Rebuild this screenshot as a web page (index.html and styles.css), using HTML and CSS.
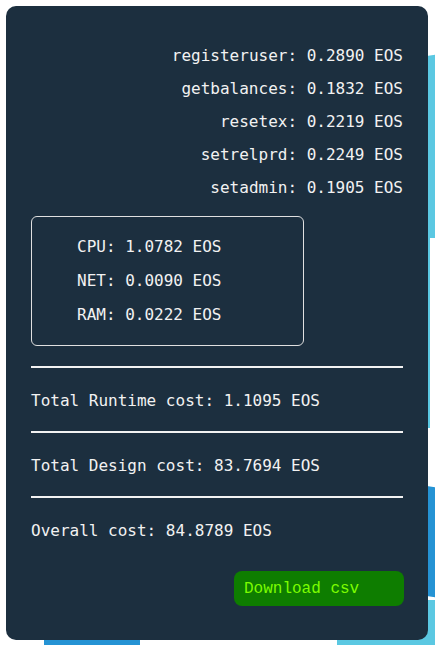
FILE: index.html
```html
<!DOCTYPE html>
<html>
<head>
<meta charset="utf-8">
<link rel="stylesheet" href="styles.css">
</head>
<body>
<div class="page">
  <div class="deco deco-cyan-top"></div>
  <div class="deco deco-cyan-line"></div>
  <div class="deco deco-blue-right"></div>
  <div class="deco deco-blue-bottom"></div>
  <div class="deco deco-cyan-bottom"></div>
  <div class="card">
    <div class="actions">
      <div class="row">registeruser: 0.2890 EOS</div>
      <div class="row">getbalances: 0.1832 EOS</div>
      <div class="row">resetex: 0.2219 EOS</div>
      <div class="row">setrelprd: 0.2249 EOS</div>
      <div class="row">setadmin: 0.1905 EOS</div>
    </div>
    <div class="resources">
      <div class="row">CPU: 1.0782 EOS</div>
      <div class="row">NET: 0.0090 EOS</div>
      <div class="row">RAM: 0.0222 EOS</div>
    </div>
    <div class="divider"></div>
    <div class="total">Total Runtime cost: 1.1095 EOS</div>
    <div class="divider"></div>
    <div class="total">Total Design cost: 83.7694 EOS</div>
    <div class="divider"></div>
    <div class="total overall">Overall cost: 84.8789 EOS</div>
    <button class="download">Download csv</button>
  </div>
</div>
</body>
</html>
```
FILE: styles.css
```css
html, body {
  margin: 0;
  padding: 0;
  background: #ffffff;
}
.page {
  position: relative;
  width: 435px;
  height: 645px;
  overflow: hidden;
  padding-top: 6px;
  box-sizing: border-box;
}
.deco {
  position: absolute;
}
.deco-cyan-top {
  left: 400px;
  top: 54px;
  width: 40px;
  height: 184px;
  background: #5bc8e2;
  clip-path: polygon(0 6px, 100% 0, 100% 100%, 0 100%);
}
.deco-cyan-line {
  left: 400px;
  top: 238px;
  width: 30px;
  height: 190px;
  background: #5bc8e2;
}
.deco-blue-right {
  left: 400px;
  top: 482px;
  width: 40px;
  height: 116px;
  background: #2593d4;
  clip-path: polygon(0 0, 100% 6px, 100% 100%, 0 calc(100% - 6px));
}
.deco-blue-bottom {
  left: 44px;
  top: 600px;
  width: 96px;
  height: 60px;
  background: #2593d4;
}
.deco-cyan-bottom {
  left: 337px;
  top: 600px;
  width: 120px;
  height: 60px;
  background: #5bc8e2;
}
.card {
  position: relative;
  margin-left: 6px;
  width: 422px;
  height: 634px;
  box-sizing: border-box;
  padding: 40px 25px 0 25px;
  background: #1c2f3f;
  border-radius: 10px;
  color: #f2f2f2;
  font-family: "DejaVu Sans Mono", "Liberation Mono", monospace;
  font-size: 16px;
  line-height: 19px;
  display: flex;
  flex-direction: column;
}
.actions {
  display: flex;
  flex-direction: column;
  align-items: flex-end;
  gap: 14px;
}
.resources {
  margin-top: 19px;
  width: 273px;
  height: 130px;
  box-sizing: border-box;
  border: 1px solid #e0e0e0;
  border-radius: 6px;
  padding: 20px 0 0 45px;
  display: flex;
  flex-direction: column;
  gap: 15px;
}
.divider {
  margin-top: 20px;
  height: 2px;
  background: #f2f2f2;
}
.total {
  padding: 23px 0 0 0;
  height: 19px;
  margin-bottom: 21px;
}
.total + .divider {
  margin-top: 0;
}
.overall {
  margin-bottom: 0;
}
.download {
  margin-top: 31px;
  align-self: flex-end;
  margin-right: -1px;
  width: 170px;
  height: 35px;
  border: none;
  border-radius: 8px;
  background: #0e7d00;
  color: #7cfc00;
  font-family: "Liberation Mono", monospace;
  font-size: 16px;
  text-align: left;
  padding: 0 0 0 10px;
}
```
